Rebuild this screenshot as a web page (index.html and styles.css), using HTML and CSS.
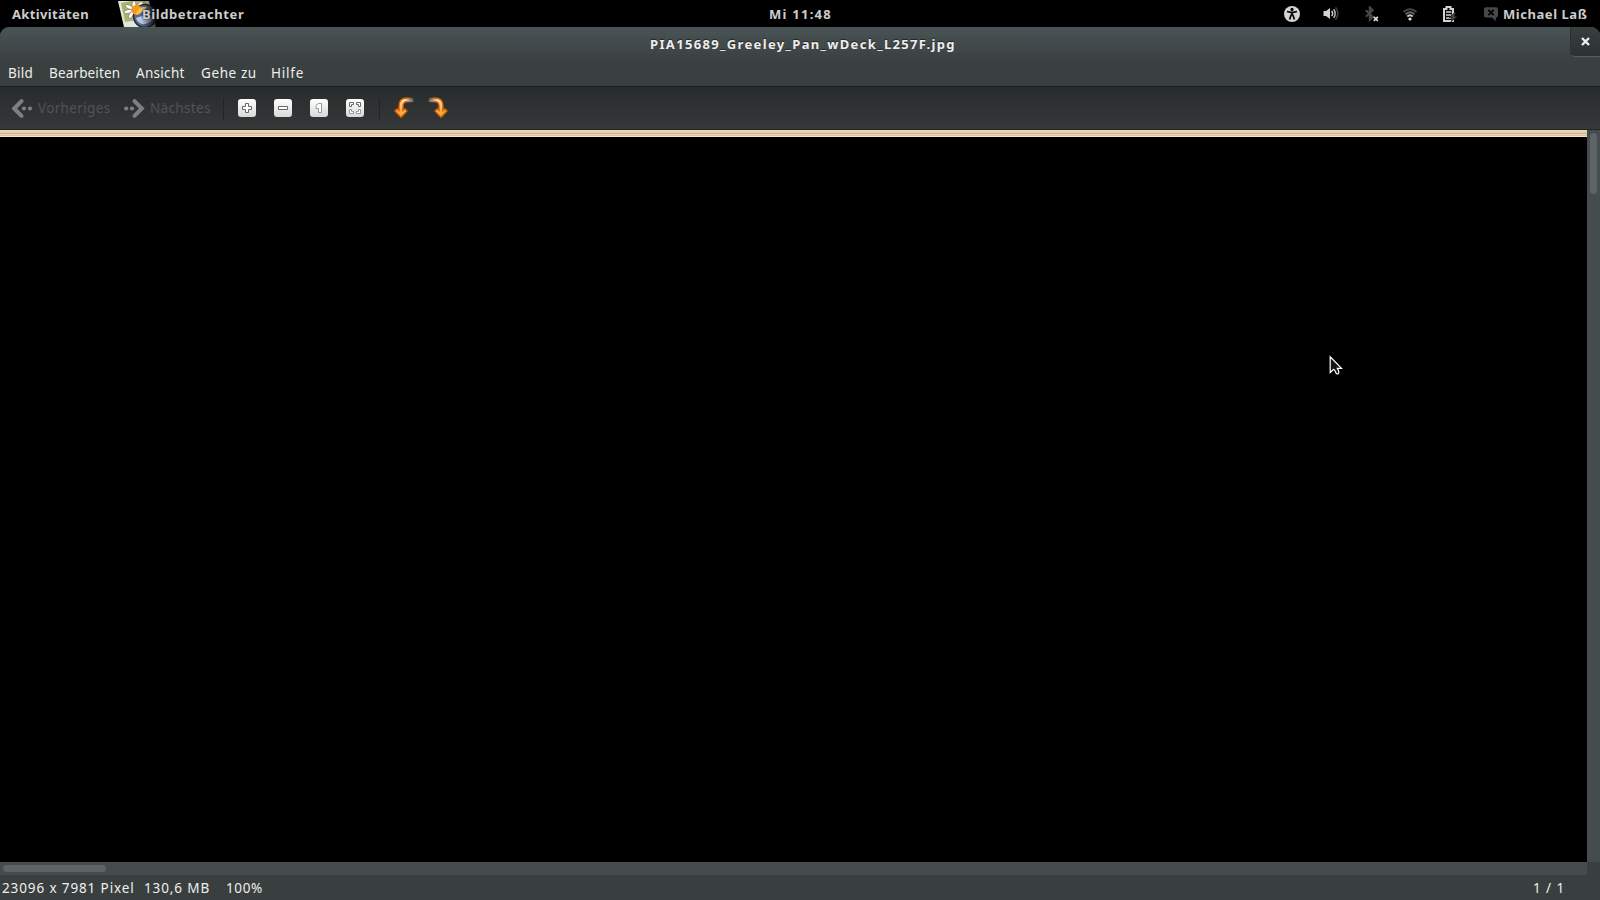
FILE: index.html
```html
<!DOCTYPE html>
<html lang="de">

<head>
  <meta charset="UTF-8">
  <title>Bildbetrachter</title>
  <link rel="stylesheet" href="styles.css">
</head>

<body>
  <header class="panel">
    <span class="activities">Aktivitäten</span>
    <div class="app-menu">
      <svg class="app-icon" width="42" height="26" viewBox="0 0 42 26">
        <defs>
          <linearGradient id="fade" x1="0" x2="1">
            <stop offset="0.55" stop-color="#fff" />
            <stop offset="1" stop-color="#000" />
          </linearGradient>
          <mask id="icon-mask">
            <rect width="42" height="26" fill="url(#fade)" />
          </mask>
        </defs>
        <g mask="url(#icon-mask)">
          <path d="M0 0L31 0L38 26L6 26Z" fill="#e4e6e1" />
          <path d="M3 2L27 -3L32 17L7 21Z" fill="#a9b568" />
          <g fill="#fff" stroke="#8f7468" stroke-width="0.7">
            <ellipse cx="16" cy="4" rx="2" ry="4" />
            <ellipse cx="11" cy="6" rx="4" ry="1.9" transform="rotate(25 11 6)" />
            <ellipse cx="10" cy="10.5" rx="4" ry="1.9" transform="rotate(-12 10 10.5)" />
            <ellipse cx="13" cy="14" rx="1.9" ry="4" transform="rotate(30 13 14)" />
            <ellipse cx="22" cy="4" rx="4" ry="2" transform="rotate(-50 22 4)" />
          </g>
          <circle cx="27" cy="15" r="11.5" fill="#5a6c8c" stroke="#252b38" stroke-width="1.5" />
          <circle cx="18.5" cy="9" r="5" fill="#f29a1c" />
          <path d="M18 14C19 8 23 5 29 6C26 10 23 12 18 14Z" fill="#f8c04c" />
          <path d="M18 17Q25 13 35 18Q30 24 24 23Q19 21 18 17Z" fill="#b9cae6" />
        </g>
      </svg>
      <span>Bildbetrachter</span>
    </div>
    <span class="clock">Mi 11:48</span>
    <div class="tray">
      <svg width="16" height="16" viewBox="0 0 16 16">
        <circle cx="8" cy="8" r="8" fill="#d3d3d3" />
        <circle cx="8" cy="3.4" r="1.6" fill="#000" />
        <path d="M3 5.5L7 6.3H9L13 5.5M8 6.5V9.5M7.3 8.5L5.6 13.5M8.7 8.5L10.4 13.5" fill="none" stroke="#000" stroke-width="1.7" />
      </svg>
      <svg width="16" height="16" viewBox="0 0 16 16">
        <path d="M0.5 5H3L7 2V13L3 10H0.5Z" fill="#d3d3d3" />
        <path d="M8.7 5Q10.6 7.5 8.7 10" fill="none" stroke="#d3d3d3" stroke-width="1.5" />
        <path d="M10.7 3.2Q13.8 7.5 10.7 11.8" fill="none" stroke="#bbb" stroke-width="1.5" />
        <path d="M12.6 1.4Q17 7.5 12.6 13.6" fill="none" stroke="#444" stroke-width="1.5" />
      </svg>
      <svg class="bluetooth" width="16" height="16" viewBox="0 0 16 16">
        <path d="M0.8 4.3L7.8 10.8L4.8 13.8V1.2L7.8 4.3L0.8 10.8" fill="none" stroke="#484848" stroke-width="2" />
        <path d="M8.8 10.8L12.8 15M12.8 10.8L8.8 15" stroke="#ddd" stroke-width="1.8" />
      </svg>
      <svg width="16" height="16" viewBox="0 0 16 16">
        <g fill="none" stroke-width="1.8">
          <path d="M1.5 6Q8 0.2 14.5 6" stroke="#484848" />
          <path d="M3.5 8.3Q8 4.2 12.5 8.3" stroke="#666" />
          <path d="M5.3 10.5Q8 8 10.7 10.5" stroke="#ccc" />
        </g>
        <circle cx="8" cy="13" r="1.6" fill="#e0e0e0" />
      </svg>
      <svg width="16" height="16" viewBox="0 0 16 16">
        <path d="M4.5 1H8.5V3H11V15H2V3H4.5Z" fill="none" stroke="#d3d3d3" stroke-width="2" />
        <path d="M4 6H9.5M4 9H9.5M4 12H9.5" stroke="#d3d3d3" stroke-width="1.3" />
        <path d="M13 6L7.5 11.5H10.5L9 16L15.5 10.2H12.3L14 6Z" fill="#484848" stroke="#000" stroke-width="0.5" />
      </svg>
      <svg class="chat" width="14" height="16" viewBox="0 0 14 16">
        <path d="M2 1.3H12Q14 1.3 14 3.3V9.5Q14 11.5 12 11.5L11.5 15L8 11.5H2Q0 11.5 0 9.5V3.3Q0 1.3 2 1.3Z" fill="#484848" />
        <path d="M4.3 3.8L9.7 9.2M9.7 3.8L4.3 9.2" stroke="#000" stroke-width="1.8" />
      </svg>
      <span class="user">Michael Laß</span>
    </div>
  </header>

  <div class="window">
    <div class="window-top">
      <div class="titlebar">
        <span class="title">PIA15689_Greeley_Pan_wDeck_L257F.jpg</span>
        <div class="close">
          <svg width="9" height="9" viewBox="0 0 9 9">
            <path d="M1 1L8 8M8 1L1 8" stroke="#eee" stroke-width="2.4" />
          </svg>
        </div>
      </div>
      <nav class="menubar">
        <span class="m-bild">Bild</span>
        <span class="m-edit">Bearbeiten</span>
        <span class="m-view">Ansicht</span>
        <span class="m-go">Gehe zu</span>
        <span class="m-help">Hilfe</span>
      </nav>
    </div>

    <div class="toolbar">
      <div class="nav prev">
        <svg width="21" height="19" viewBox="0 0 21 19">
          <path d="M9.5 2.2L2.2 9.5L9.5 16.8" fill="none" stroke="#7d8080" stroke-width="4" stroke-linecap="round" />
          <circle cx="12" cy="9.5" r="2.1" fill="#7d8080" />
          <circle cx="18" cy="9.5" r="2.1" fill="#7d8080" />
        </svg>
        <span>Vorheriges</span>
      </div>
      <div class="nav next">
        <svg width="21" height="19" viewBox="0 0 21 19">
          <path d="M10.5 2.2L17.8 9.5L10.5 16.8" fill="none" stroke="#7d8080" stroke-width="4" stroke-linecap="round" />
          <circle cx="2.2" cy="9.5" r="2.1" fill="#7d8080" />
          <circle cx="8" cy="9.5" r="2.1" fill="#7d8080" />
        </svg>
        <span>Nächstes</span>
      </div>
      <div class="separator"></div>
      <div class="zoom-tools">
        <div class="key">
          <svg width="18" height="18" viewBox="0 0 18 18">
            <path d="M7.5 4.5H10.5V7.5H13.5V10.5H10.5V13.5H7.5V10.5H4.5V7.5H7.5Z" />
          </svg>
        </div>
        <div class="key">
          <svg width="18" height="18" viewBox="0 0 18 18">
            <path d="M4.5 7.5H13.5V10.5H4.5Z" />
          </svg>
        </div>
        <div class="key">
          <svg width="18" height="18" viewBox="0 0 18 18">
            <path class="light" d="M8.5 4.5H11.5V13.5H8.5V9.5H6V6.5Z" />
          </svg>
        </div>
        <div class="key">
          <svg width="18" height="18" viewBox="0 0 18 18">
            <path d="M3.5 3.5H7.5V5.5H5.5V7.5H3.5ZM10.5 3.5H14.5V7.5H12.5V5.5H10.5Z" />
            <path class="light" d="M3.5 10.5H5.5V12.5H7.5V14.5H3.5ZM12.5 10.5H14.5V14.5H10.5V12.5H12.5Z" />
          </svg>
        </div>
      </div>
      <div class="separator second"></div>
      <div class="rotate-tools">
        <svg width="20" height="22" viewBox="0 0 20 22">
          <defs>
            <linearGradient id="edge" x1="0" x2="1">
              <stop offset="0.6" stop-color="#d86000" />
              <stop offset="1" stop-color="#d86000" stop-opacity="0" />
            </linearGradient>
            <linearGradient id="fill" x1="1" x2="0" y1="0" y2="1">
              <stop offset="0" stop-color="#fff" stop-opacity="0" />
              <stop offset="0.3" stop-color="#ffe6c8" />
              <stop offset="0.6" stop-color="#ffb45a" />
              <stop offset="1" stop-color="#ff9413" />
            </linearGradient>
          </defs>
          <path id="turn" d="M19.5 1H13Q5 1 5 9V13.5L3 12L1 14L7 20.3L13 14L11 12L9 13.5V9Q9 4.8 13 4.8H19.5Z" fill="url(#fill)" stroke="url(#edge)" stroke-width="1.4" />
        </svg>
        <svg width="20" height="22" viewBox="0 0 20 22">
          <use href="#turn" transform="translate(20 0) scale(-1 1)" />
        </svg>
      </div>
    </div>

    <main class="viewer">
      <div class="photo"></div>
      <div class="scroll vertical">
        <div class="thumb"></div>
      </div>
      <div class="scroll horizontal">
        <div class="thumb"></div>
      </div>
      <div class="corner"></div>
    </main>

    <footer class="statusbar">
      <span class="size">23096 x 7981 Pixel</span>
      <span class="bytes">130,6 MB</span>
      <span class="zoom">100%</span>
      <span class="count">1 / 1</span>
    </footer>
  </div>

  <svg class="cursor" width="16" height="23" viewBox="0 0 16 23">
    <path d="M1.2 1.8V17.5L4.6 14.3Q6 14.5 6.5 17Q7.5 19.5 9.3 18.6Q10.8 17.5 8.3 13.4H12.5Z" fill="#151515" stroke="#fff" stroke-width="1.2" />
  </svg>
</body>

</html>
```

FILE: styles.css
```css
* {
  box-sizing: border-box;
}

body {
  margin: 0;
  width: 1600px;
  height: 900px;
  overflow: hidden;
  background: #000;
  color: #eee;
  font-family: "Noto Sans", "Open Sans", sans-serif;
  font-size: 13.5px;
  line-height: 18px;
  white-space: nowrap;
}

svg {
  display: block;
  flex: none;
}

/* top panel */
.panel {
  display: grid;
  grid-template-columns: 118px 651px 1fr auto;
  align-items: center;
  height: 27px;
  font-weight: bold;
  font-size: 13px;
  color: #ccc;
}

.activities {
  padding-left: 12px;
  letter-spacing: 0.35px;
}

.app-menu {
  display: flex;
  align-items: center;
}

.app-icon {
  margin-right: -18px;
}

.app-menu span {
  position: relative;
  letter-spacing: 0.6px;
  text-shadow: 0 0 2px #000;
}

.clock {
  letter-spacing: 1.25px;
}

.tray {
  display: flex;
  align-items: center;
  gap: 23.5px;
  padding-right: 13px;
}

.tray .bluetooth {
  margin: 0 -2px 0 2px;
}

.tray .chat {
  margin-left: 2.5px;
}

.tray .user {
  width: 84px;
  margin-left: -18px;
  letter-spacing: 0.55px;
}

/* window frame */
.window {
  display: flex;
  flex-direction: column;
  height: 873px;
  border-radius: 9px 9px 0 0;
  overflow: hidden;
  background: #393f3f;
}

.window-top {
  height: 59px;
  background: linear-gradient(#4a5456, #3a4040 34px, #393f3f);
}

.titlebar {
  display: grid;
  grid-template-columns: 1570px 30px;
  height: 34px;
}

.title {
  padding: 8px 0 0 650px;
  font-weight: bold;
  font-size: 13px;
  letter-spacing: 1.35px;
  text-shadow: 0 -1px 1px #222;
}

.close {
  display: flex;
  justify-content: center;
  height: 30px;
  padding-top: 10px;
  border: solid #526060;
  border-width: 0 0 1px 1px;
  border-left-color: #2b3030;
  border-radius: 0 0 0 5px;
  background: linear-gradient(#393e3e, #2d3131);
}

.menubar {
  display: flex;
  padding: 3px 0 0 8px;
}

.m-bild {
  width: 41px;
  letter-spacing: 0.25px;
}

.m-edit {
  width: 87px;
  letter-spacing: 0.15px;
}

.m-view {
  width: 65px;
  letter-spacing: 0.3px;
}

.m-go {
  width: 70px;
  letter-spacing: 0.6px;
}

.m-help {
  letter-spacing: 0.8px;
}

/* toolbar */
.toolbar {
  display: flex;
  align-items: center;
  height: 44px;
  padding-left: 12px;
  border-top: 1px solid #191c1c;
  border-bottom: 1px solid #202424;
  background: linear-gradient(#292c2d, #343838);
}

.nav {
  display: flex;
  align-items: center;
  gap: 5px;
  color: #505454;
  letter-spacing: 0.35px;
}

.prev {
  width: 112px;
}

.next {
  width: 99px;
}

.separator {
  width: 1px;
  height: 22px;
  margin-top: 1px;
  background: #222525;
}

.zoom-tools {
  display: flex;
  gap: 18px;
  margin-left: 14px;
}

.key {
  width: 18px;
  height: 18px;
  border-radius: 3px;
  background: linear-gradient(#fff, #d8d8d8);
}

.key path {
  fill: #fff;
  stroke: #666;
}

.key .light {
  stroke: #999;
}

.second {
  margin-left: 15px;
}

.rotate-tools {
  display: flex;
  gap: 14px;
  margin-left: 14px;
}

/* image area */
.viewer {
  flex: 1;
  display: grid;
  grid-template-columns: 1fr 13px;
  grid-template-rows: 1fr 13px;
}

.photo {
  background: linear-gradient(#ead8b8 0 1px, #e8cfae 1px 3px, #c9b28c 3px 4px, #ecd9bb 4px 5px, #dcc39d 5px 6px, #f3e5c9 6px 7px, #000 7px);
}

.scroll {
  background: #444c4d;
}

.thumb {
  border-radius: 4px;
  background: #5d6463;
}

.vertical {
  padding: 3px;
}

.vertical .thumb {
  height: 61px;
}

.horizontal {
  padding: 3px;
}

.horizontal .thumb {
  width: 103px;
  height: 7px;
}

.statusbar {
  display: flex;
  height: 25px;
  padding: 4px 35px 0 2px;
  letter-spacing: 0.88px;
}

.size {
  width: 142px;
}

.bytes {
  width: 82px;
}

.zoom {
  letter-spacing: 0.6px;
}

.count {
  margin-left: auto;
}

.cursor {
  position: absolute;
  left: 1329px;
  top: 355px;
}
```
